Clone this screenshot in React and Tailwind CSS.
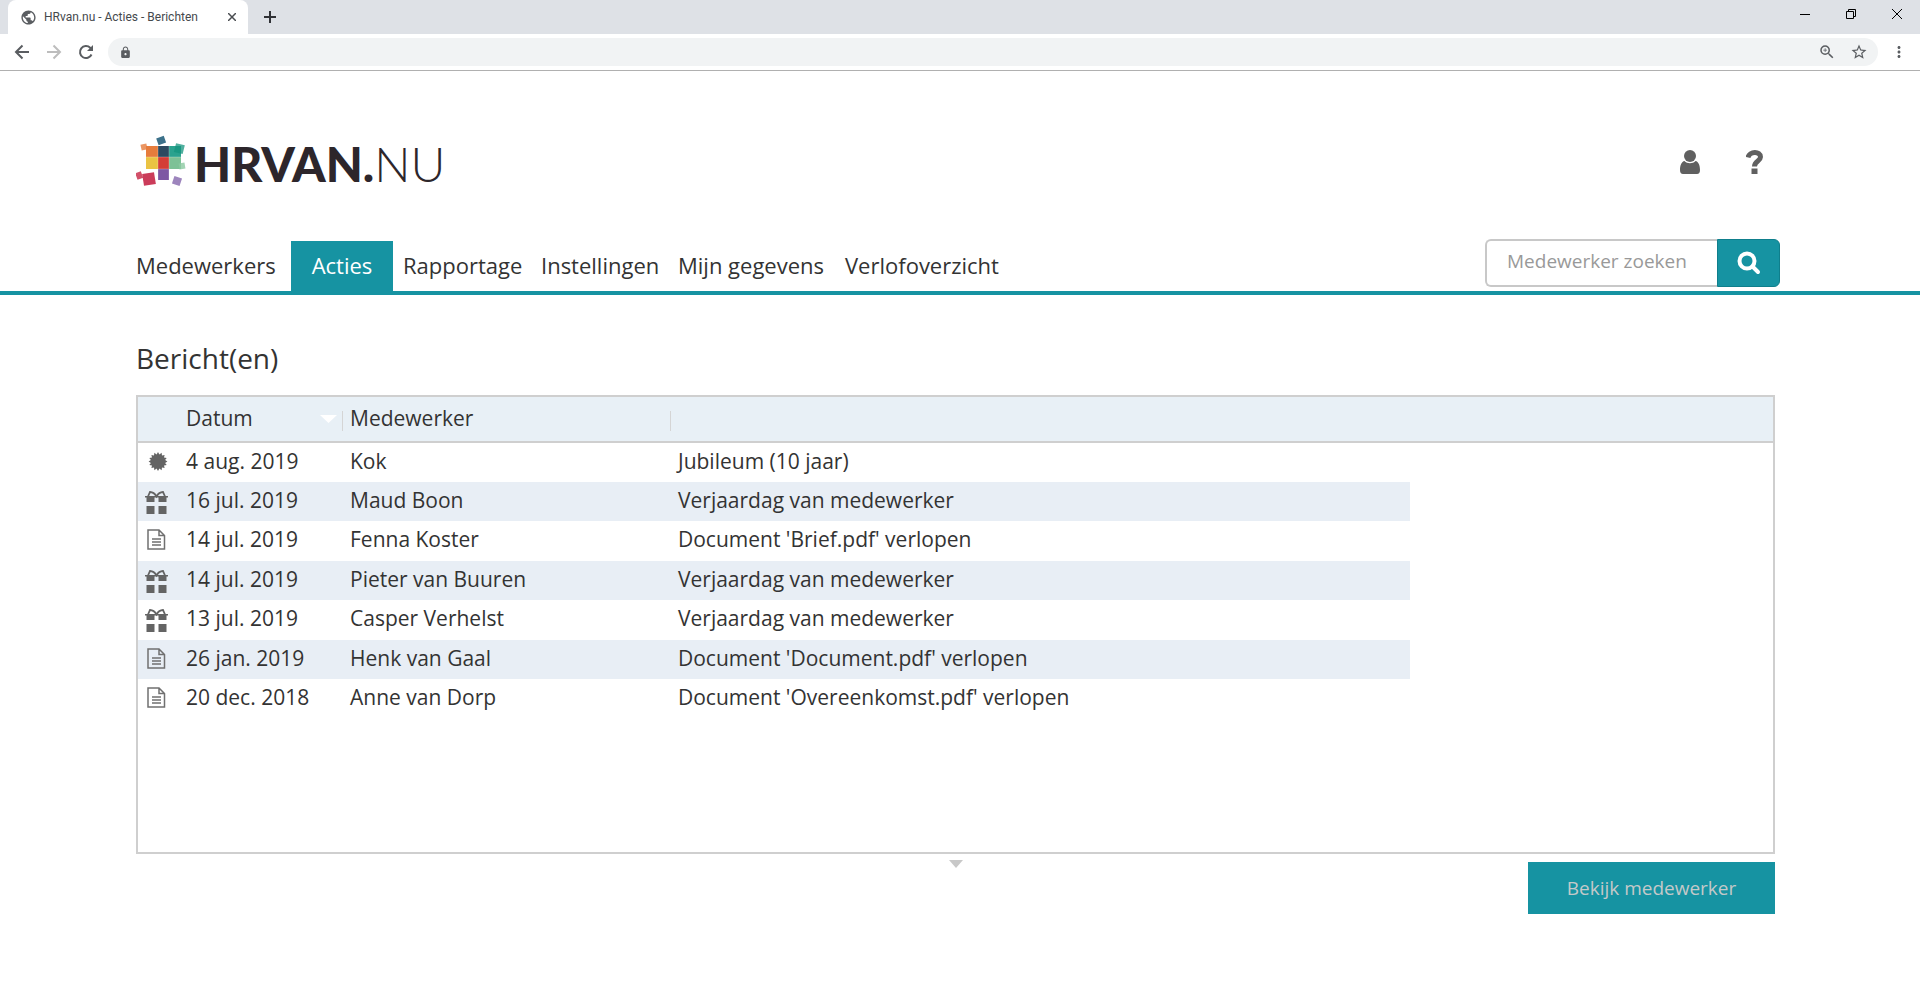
import { useState } from 'react';
import { MdLock, MdZoomIn, MdStarBorder, MdMoreVert, MdPublic } from 'react-icons/md';

const navItems = [
  { label: 'Medewerkers', width: 'w-[155px]' },
  { label: 'Acties', width: 'w-[102px]' },
  { label: 'Rapportage', width: 'w-[138px] ml-[10px]' },
  { label: 'Instellingen', width: 'w-[137px]' },
  { label: 'Mijn gegevens', width: 'w-[167px]' },
  { label: 'Verlofoverzicht', width: 'w-[167px]' },
];

const messages = [
  { icon: 'jubilee', date: '4 aug. 2019', name: 'Kok', text: 'Jubileum (10 jaar)' },
  { icon: 'gift', date: '16 jul. 2019', name: 'Maud Boon', text: 'Verjaardag van medewerker' },
  { icon: 'document', date: '14 jul. 2019', name: 'Fenna Koster', text: "Document 'Brief.pdf' verlopen" },
  { icon: 'gift', date: '14 jul. 2019', name: 'Pieter van Buuren', text: 'Verjaardag van medewerker' },
  { icon: 'gift', date: '13 jul. 2019', name: 'Casper Verhelst', text: 'Verjaardag van medewerker' },
  { icon: 'document', date: '26 jan. 2019', name: 'Henk van Gaal', text: "Document 'Document.pdf' verlopen" },
  { icon: 'document', date: '20 dec. 2018', name: 'Anne van Dorp', text: "Document 'Overeenkomst.pdf' verlopen" },
];

// 16-pointed badge
const burst = Array.from({ length: 32 }, (_, i) => {
  const r = i % 2 ? 7.2 : 9.4;
  const a = (i * Math.PI) / 16;
  return `${(14 + r * Math.cos(a)).toFixed(1)},${(10.5 + r * Math.sin(a)).toFixed(1)}`;
}).join(' ');

function MessageIcon({ type }) {
  if (type === 'jubilee') {
    return (
      <svg width="24" height="24" viewBox="0 0 24 24" fill="#646464">
        <polygon points={burst} />
      </svg>
    );
  }
  if (type === 'gift') {
    return (
      <svg width="24" height="24" viewBox="0 0 24 24" fill="#646464">
        <path d="M1 6h23v1.500h-1.500v4.500H14.500V7.500h-4v4.500H2.500V7.500H1zM2.500 16h8v8h-8zM14.500 16h8v8h-8z" />
        <path d="M4 6.500L6 2q4 .2 6.500 4.500Q15 2.200 19 2l2 4.500" fill="none" stroke="#646464" strokeWidth="1.800" />
      </svg>
    );
  }
  return (
    <svg width="24" height="24" viewBox="0 0 24 24" fill="none" stroke="#707070" strokeWidth="1.500">
      <path d="M4 1h11l5.500 5.500v13.500H4zM15 1v5.500h5.500" />
      <path d="M8 10h9M8 13h9M8 16h9" />
    </svg>
  );
}

function BrowserIcon({ children }) {
  return (
    <svg width="20" height="20" viewBox="0 0 20 20" fill="none" stroke="currentColor" strokeWidth="2">
      {children}
    </svg>
  );
}

function BrowserBar() {
  return (
    <header className="border-b border-[#b0b0b0] font-['Roboto',sans-serif]">
      <div className="flex h-[34px] items-stretch bg-[#dee1e6] pl-2">
        <div className="flex w-[240px] items-center rounded-t-lg bg-white pl-3 pr-2 text-xs text-[#45494d]">
          <MdPublic size={17} color="#5a5d61" />
          <span className="ml-[7px] flex-1 whitespace-nowrap">HRvan.nu - Acties - Berichten</span>
          <button type="button" aria-label="Tabblad sluiten" className="flex size-4 items-center justify-center">
            <svg width="8" height="8" viewBox="0 0 8 8" stroke="#4a4d51" strokeWidth="1.500">
              <path d="M0 0l8 8M8 0L0 8" />
            </svg>
          </button>
        </div>
        <button type="button" aria-label="Nieuw tabblad" className="ml-4 flex items-center">
          <svg width="12" height="12" viewBox="0 0 12 12" stroke="#303236" strokeWidth="2">
            <path d="M6 0v12M0 6h12" />
          </svg>
        </button>
        <div className="ml-auto flex h-7 items-center gap-9 pr-[18px]">
          <button type="button" aria-label="Minimaliseren">
            <svg width="10" height="10" viewBox="0 0 10 10" stroke="#000"><path d="M0 5.500h10" /></svg>
          </button>
          <button type="button" aria-label="Verkleinen">
            <svg width="10" height="10" viewBox="0 0 10 10" stroke="#000" fill="none">
              <path d="M.5 2.500h7v7h-7zM2.500 2.500v-2h7v7h-2" />
            </svg>
          </button>
          <button type="button" aria-label="Sluiten">
            <svg width="10" height="10" viewBox="0 0 10 10" stroke="#000"><path d="M0 0l10 10M10 0L0 10" /></svg>
          </button>
        </div>
      </div>
      <div className="flex h-9 items-center gap-3 bg-white pl-3 text-[#5a5d61]">
        <button type="button" aria-label="Terug">
          <BrowserIcon><path d="M17 10H4M10.500 3.500L4 10l6.500 6.500" /></BrowserIcon>
        </button>
        <button type="button" aria-label="Vooruit" className="text-[#bdbdbd]">
          <BrowserIcon><path d="M3 10h13M9.500 3.500L16 10l-6.500 6.500" /></BrowserIcon>
        </button>
        <button type="button" aria-label="Vernieuwen">
          <BrowserIcon>
            <path d="M15.500 12.500A6 6 0 1 1 14.200 5.800L16 7.500" />
            <path d="M17 3v6h-6z" fill="currentColor" stroke="none" />
          </BrowserIcon>
        </button>
        <div className="flex h-7 flex-1 items-center rounded-full bg-[#f1f3f4] pl-[11px] pr-[10px]">
          <MdLock size={13} />
          <input aria-label="Adres" className="mx-2 min-w-0 flex-1 bg-transparent text-sm outline-none" />
          <button type="button" aria-label="Zoom"><MdZoomIn size={18} /></button>
          <button type="button" aria-label="Bladwijzer" className="ml-[14px]"><MdStarBorder size={18} /></button>
        </div>
        <button type="button" aria-label="Menu" className="mr-3"><MdMoreVert size={18} /></button>
      </div>
    </header>
  );
}

function Logo() {
  return (
    <a href="#home" aria-label="HRvan.nu" className="flex items-center text-[#2d262b]">
      <svg width="52" height="54" viewBox="0 0 52 54">
        <rect x="10" y="11" width="12" height="11" fill="#e67c3c" />
        <rect x="22" y="11" width="11" height="11" fill="#2c4a60" />
        <rect x="33" y="11" width="12" height="11" fill="#2ba28e" />
        <rect x="10" y="22" width="12" height="12" fill="#eac343" />
        <rect x="22" y="22" width="11" height="12" fill="#d43d36" />
        <rect x="33" y="22" width="12" height="12" fill="#7dc196" />
        <rect x="22" y="34" width="11" height="11" fill="#7e57a3" />
        <path d="M10 22h35M22 11v34M33 11v34M22 34h11" stroke="#fff" strokeWidth=".5" opacity=".5" />
        <rect x="21" y="2" width="8" height="7" fill="#3c718a" transform="rotate(-20 25 5)" />
        <rect x="5" y="9" width="6" height="6" fill="#e67c3c" opacity=".8" transform="rotate(-12 8 12)" />
        <rect x="39" y="9" width="9" height="9" fill="#15947d" opacity=".75" transform="rotate(14 43 13)" />
        <rect x="43" y="28" width="6" height="6" fill="#8cc9a1" opacity=".8" transform="rotate(-10 46 31)" />
        <rect x="0" y="37" width="6" height="7" fill="#d25069" transform="rotate(-20 3 40)" />
        <rect x="7" y="38" width="12" height="12" fill="#cb3c5a" transform="rotate(-9 13 44)" />
        <rect x="37" y="42" width="8" height="8" fill="#9d85bd" transform="rotate(18 41 46)" />
      </svg>
      <span className="ml-[6px] whitespace-nowrap pt-1 font-['Lato',sans-serif] text-[48px] leading-[54px]">
        <span className="font-black">HRVAN.</span>
        <span className="font-light">NU</span>
      </span>
    </a>
  );
}

export default function App() {
  const [active, setActive] = useState('Acties');
  const [query, setQuery] = useState('');

  return (
    <div className="min-h-screen bg-white font-['Open_Sans','Noto_Sans',sans-serif] text-[#333]">
      <BrowserBar />

      <div className="flex h-[118px] items-center justify-between pl-[136px] pr-[156px] pt-16">
        <Logo />
        <div className="flex items-center gap-[46px]">
          <button type="button" aria-label="Profiel">
            <svg width="20" height="24" viewBox="0 0 20 24" fill="#606060">
              <circle cx="10" cy="6" r="6" />
              <path d="M4.500 11C7 14 13 14 15.500 11c3 .5 4.500 4.500 4.500 9 0 2.500-1 4-3 4H3c-2 0-3-1.500-3-4 0-4.500 1.500-8.500 4.500-9z" />
            </svg>
          </button>
          <button type="button" aria-label="Help">
            <svg width="18" height="24" viewBox="0 0 18 24" fill="none" stroke="#606060" strokeWidth="5">
              <path d="M2 7.500C3.500 1 14.500 1 14.500 7c0 4-6 4-6 9.500" />
              <path d="M8.500 18.500V24" strokeWidth="6" />
            </svg>
          </button>
        </div>
      </div>

      <div className="mt-[50px] flex items-start justify-between border-b-4 border-[#1693a2] pl-[136px] pr-[140px]">
        <nav className="mt-[2px] flex">
          {navItems.map((item) => (
            <a
              key={item.label}
              href={`#${item.label}`}
              onClick={() => setActive(item.label)}
              className={`h-[50px] whitespace-nowrap text-[22px] leading-[48px] ${item.width} ${
                active === item.label ? 'bg-[#1693a2] text-center text-white' : ''
              }`}
            >
              {item.label}
            </a>
          ))}
        </nav>
        <form className="flex h-12" onSubmit={(e) => e.preventDefault()}>
          <input
            aria-label="Medewerker zoeken"
            placeholder="Medewerker zoeken"
            value={query}
            onChange={(e) => setQuery(e.target.value)}
            className="w-[232px] rounded-l-md border-2 border-r-0 border-[#c8c8c8] pb-1 pl-5 text-[19px] outline-none placeholder:text-[#999]"
          />
          <button type="submit" aria-label="Zoeken" className="flex w-[63px] items-center justify-center rounded-r-md border border-[#0f7f8c] bg-[#1693a2]">
            <svg width="24" height="24" viewBox="0 0 24 24" fill="none" stroke="#fff" strokeWidth="4">
              <circle cx="10" cy="10" r="7.500" />
              <path d="M15.500 15.500l5.500 5.500" strokeLinecap="round" />
            </svg>
          </button>
        </form>
      </div>

      <main className="pl-[136px] pr-[145px] pt-[42px]">
        <h1 className="text-[28px] leading-[42px]">Bericht(en)</h1>

        <div className="mt-4 min-h-[459px] border-2 border-[#cfcfcf]">
          <table className="w-full table-fixed border-collapse text-left text-[21px] leading-7">
            <colgroup>
              <col className="w-12" />
              <col className="w-[164px]" />
              <col className="w-[328px]" />
              <col className="w-[732px]" />
              <col />
            </colgroup>
            <thead>
              <tr className="h-[45px] border-b-2 border-[#cfcfcf] bg-[#e8f0f6]">
                <th aria-label="Soort" />
                <th className="p-0 font-normal">
                  <div className="flex items-center justify-between">
                    <span className="pb-[2px]">Datum</span>
                    <svg width="17" height="8" viewBox="0 0 17 8" fill="#fff" className="ml-auto mr-[5px]">
                      <path d="M0 0h17L8.500 8z" />
                    </svg>
                    <span className="mr-[7px] mt-1 h-5 w-px bg-[#d5d5d5]" />
                  </div>
                </th>
                <th className="p-0 font-normal">
                  <div className="flex items-center justify-between">
                    <span className="pb-[2px]">Medewerker</span>
                    <span className="mr-[7px] mt-1 h-5 w-px bg-[#d5d5d5]" />
                  </div>
                </th>
                <th aria-label="Bericht" />
                <th aria-label="Leeg" />
              </tr>
            </thead>
            <tbody>
              {messages.map((m, i) => (
                <tr key={i} className="group h-10 even:h-[39px]">
                  <td className="p-0 pl-[6px] group-even:bg-[#e8eef5]">
                    <MessageIcon type={m.icon} />
                  </td>
                  <td className="p-0 pb-1 group-even:bg-[#e8eef5]">{m.date}</td>
                  <td className="p-0 pb-1 group-even:bg-[#e8eef5]">{m.name}</td>
                  <td className="p-0 pb-1 group-even:bg-[#e8eef5]">{m.text}</td>
                  <td />
                </tr>
              ))}
            </tbody>
          </table>
        </div>

        <div className="flex justify-center pt-[6px]">
          <svg width="14" height="8" viewBox="0 0 14 8" fill="#c8c8c8">
            <path d="M0 0h14L7 8z" />
          </svg>
        </div>
        <div className="-mt-[6px] flex justify-end">
          <button type="button" className="h-[52px] w-[247px] bg-[#1693a2] text-[19px] text-[#c4c9c9]">
            Bekijk medewerker
          </button>
        </div>
      </main>
    </div>
  );
}
